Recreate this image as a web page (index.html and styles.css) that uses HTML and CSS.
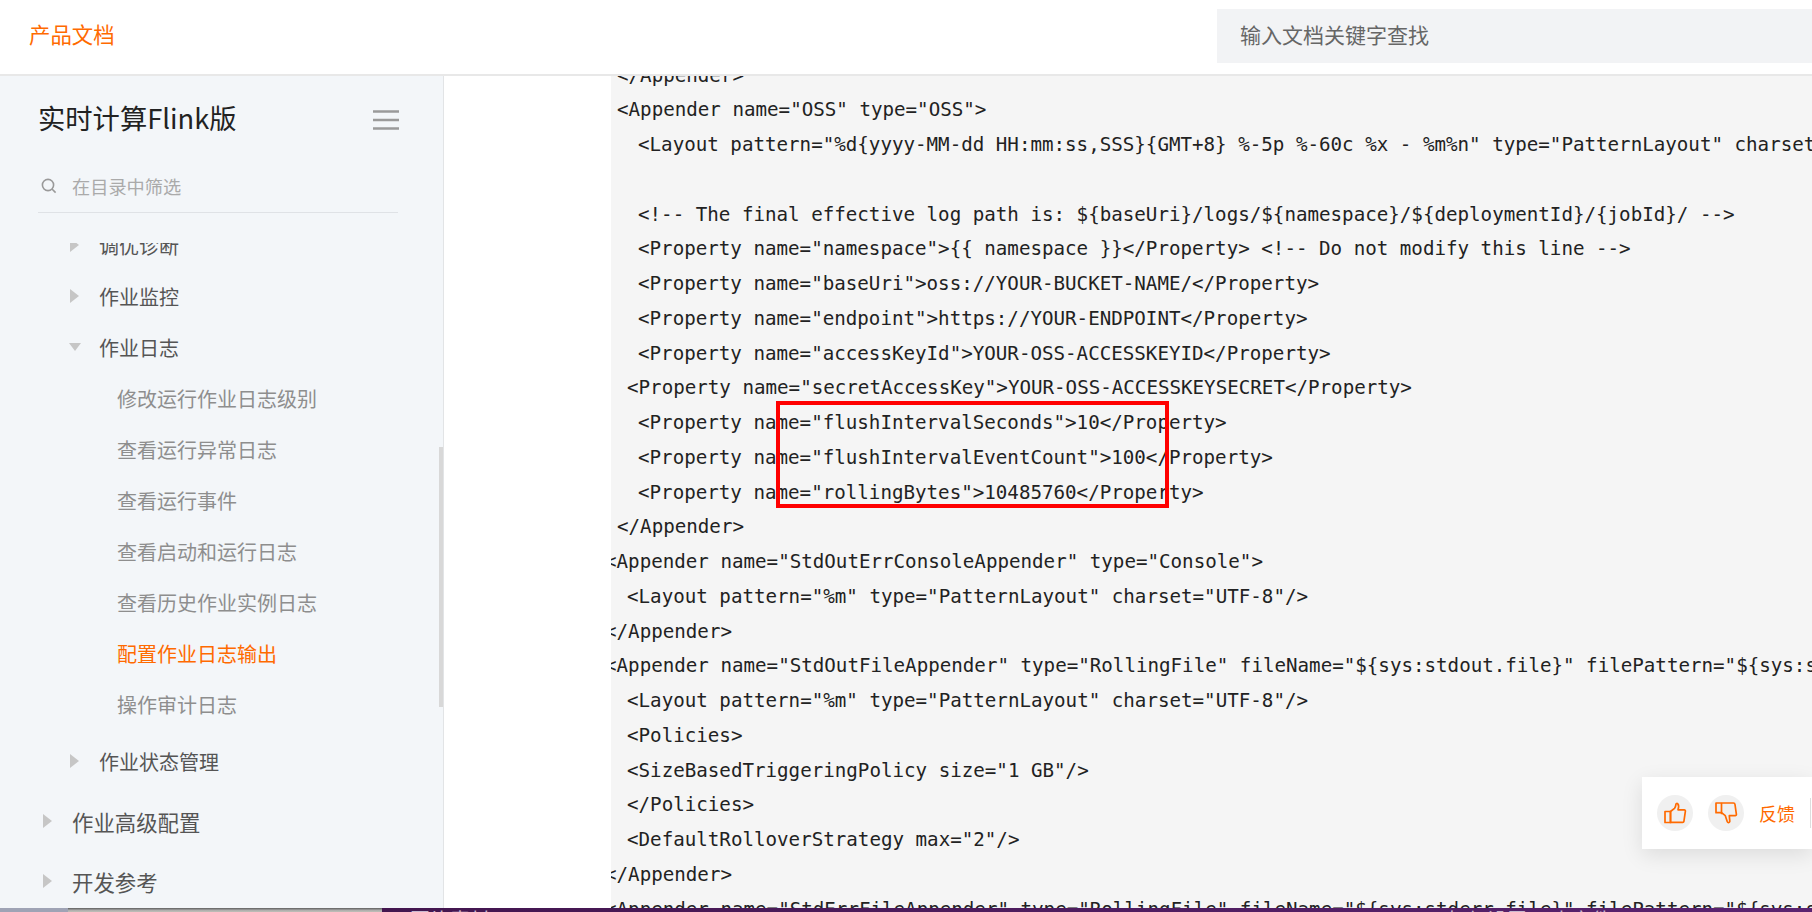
FILE: index.html
```html
<!DOCTYPE html>
<html lang="zh">
<head>
<meta charset="utf-8">
<title>配置作业日志输出</title>
<link rel="stylesheet" href="styles.css">
</head>
<body>
<div class="page">
  <header class="topbar">
    <a class="brand">产品文档</a>
    <div class="search">输入文档关键字查找</div>
  </header>
  <div class="main">
    <aside class="sidebar">
      <div class="side-head">
        <h1 class="side-title">实时计算Flink版</h1>
        <svg class="burger" width="26" height="20" viewBox="0 0 26 20"><path d="M0 1.500h26M0 10h26M0 18.500h26" stroke="#9a9a9a" stroke-width="2.400" fill="none"/></svg>
      </div>
      <div class="filter">
        <svg class="filter-icon" width="16" height="16" viewBox="0 0 16 16"><circle cx="7" cy="7" r="5.600" stroke="#999" stroke-width="1.600" fill="none"/><path d="M11 11l3.600 3.600" stroke="#999" stroke-width="1.600" fill="none"/></svg>
        <span>在目录中筛选</span>
      </div>
      <nav class="tree">
        <div class="tree-inner">
          <div class="row lv2"><i class="tri right"></i>调优诊断</div>
          <div class="row lv2"><i class="tri right"></i>作业监控</div>
          <div class="row lv2"><i class="tri down"></i>作业日志</div>
          <div class="row leaf">修改运行作业日志级别</div>
          <div class="row leaf">查看运行异常日志</div>
          <div class="row leaf">查看运行事件</div>
          <div class="row leaf">查看启动和运行日志</div>
          <div class="row leaf">查看历史作业实例日志</div>
          <div class="row leaf active">配置作业日志输出</div>
          <div class="row leaf">操作审计日志</div>
          <div class="row lv2 state"><i class="tri right"></i>作业状态管理</div>
          <div class="row lv1 adv"><i class="tri right"></i>作业高级配置</div>
          <div class="row lv1 dev"><i class="tri right"></i>开发参考</div>
        </div>
      </nav>
      <div class="side-scroll"></div>
    </aside>
    <section class="content">
      <div class="code">
        <div class="code-lines">
          <code class="l i1">&lt;/Appender&gt;</code>
          <code class="l i1">&lt;Appender name="OSS" type="OSS"&gt;</code>
          <code class="l i3">&lt;Layout pattern="%d{yyyy-MM-dd HH:mm:ss,SSS}{GMT+8} %-5p %-60c %x - %m%n" type="PatternLayout" charset="UTF-8"/&gt;</code>
          <code class="l i3"> </code>
          <code class="l i3">&lt;!-- The final effective log path is: ${baseUri}/logs/${namespace}/${deploymentId}/{jobId}/ --&gt;</code>
          <code class="l i3">&lt;Property name="namespace"&gt;{{ namespace }}&lt;/Property&gt; &lt;!-- Do not modify this line --&gt;</code>
          <code class="l i3">&lt;Property name="baseUri"&gt;oss://YOUR-BUCKET-NAME/&lt;/Property&gt;</code>
          <code class="l i3">&lt;Property name="endpoint"&gt;https://YOUR-ENDPOINT&lt;/Property&gt;</code>
          <code class="l i3">&lt;Property name="accessKeyId"&gt;YOUR-OSS-ACCESSKEYID&lt;/Property&gt;</code>
          <code class="l i2">&lt;Property name="secretAccessKey"&gt;YOUR-OSS-ACCESSKEYSECRET&lt;/Property&gt;</code>
          <code class="l i3">&lt;Property name="flushIntervalSeconds"&gt;10&lt;/Property&gt;</code>
          <code class="l i3">&lt;Property name="flushIntervalEventCount"&gt;100&lt;/Property&gt;</code>
          <code class="l i3">&lt;Property name="rollingBytes"&gt;10485760&lt;/Property&gt;</code>
          <code class="l i1">&lt;/Appender&gt;</code>
          <code class="l i0">&lt;Appender name="StdOutErrConsoleAppender" type="Console"&gt;</code>
          <code class="l i2">&lt;Layout pattern="%m" type="PatternLayout" charset="UTF-8"/&gt;</code>
          <code class="l i0">&lt;/Appender&gt;</code>
          <code class="l i0">&lt;Appender name="StdOutFileAppender" type="RollingFile" fileName="${sys:stdout.file}" filePattern="${sys:stdout.file}.%i"&gt;</code>
          <code class="l i2">&lt;Layout pattern="%m" type="PatternLayout" charset="UTF-8"/&gt;</code>
          <code class="l i2">&lt;Policies&gt;</code>
          <code class="l i2">&lt;SizeBasedTriggeringPolicy size="1 GB"/&gt;</code>
          <code class="l i2">&lt;/Policies&gt;</code>
          <code class="l i2">&lt;DefaultRolloverStrategy max="2"/&gt;</code>
          <code class="l i0">&lt;/Appender&gt;</code>
          <code class="l i0">&lt;Appender name="StdErrFileAppender" type="RollingFile" fileName="${sys:stderr.file}" filePattern="${sys:stderr.file}.%i"&gt;</code>
        </div>
        <div class="redbox"></div>
      </div>
      <div class="feedback">
        <span class="fb-btn"><svg width="24" height="24" viewBox="0 0 24 24" fill="none" stroke="#ff6a00" stroke-width="1.700" stroke-linejoin="round" stroke-linecap="round"><path d="M7.500 10.500l4-3.200c.8-.8 1.200-1.800 1.400-4 .1-.9 1.200-1.100 1.900-.4 1 1.100 1.100 3.300.2 5.900h6.200c.8 0 1.300.7 1.200 1.400l-1.500 10.200c-.1.6-.6 1-1.200 1H7.500z"/><path d="M2 10.500h5.500v11H2z"/></svg></span>
        <span class="fb-btn"><svg width="24" height="24" viewBox="0 0 24 24" fill="none" stroke="#ff6a00" stroke-width="1.700" stroke-linejoin="round" stroke-linecap="round"><path d="M2 2h17.500c.8 0 1.400.7 1.500 1.500l1.400 9.800c.1.700-.4 1.400-1.200 1.400h-5.900l.5 5.700c-.2 1.500-2 1.600-2.500.3l-2-6-3.800-3H2z"/><path d="M7.500 2.500v10"/></svg></span>
        <span class="fb-label">反馈</span>
        <span class="fb-sep"></span>
      </div>
    </section>
  </div>
  <footer class="strip">
    <div class="strip-left"></div>
    <div class="strip-right">
      <span class="strip-text">图片素材</span>
      <span class="strip-text far">如何设置 日志文件</span>
    </div>
  </footer>
</div>
</body>
</html>
```
FILE: styles.css
```css
* { box-sizing: border-box; }
html, body { margin: 0; padding: 0; height: 100%; overflow: hidden; }
body { font-family: "Noto Sans CJK SC", "Liberation Sans", sans-serif; background: #fff; color: #333; }
.page { width: 1812px; height: 912px; display: flex; flex-direction: column; overflow: hidden; }

.topbar { height: 76px; flex: none; background: #fff; border-bottom: 2px solid #e8e8e8; display: flex; align-items: flex-start; justify-content: space-between; }
.brand { margin: 20px 0 0 29px; font-size: 21.400px; line-height: 28px; color: #ff6a00; }
.search { margin-top: 9px; width: 595px; height: 54px; background: #f2f3f5; padding-left: 23px; font-size: 21px; line-height: 50px; color: #666; }

.main { flex: 1; min-height: 0; display: flex; }
.sidebar { width: 444px; flex: none; position: relative; background: #f3f6f9; border-right: 1px solid #e2e4e6; padding: 0 0 0 38px; display: flex; flex-direction: column; overflow: hidden; }
.side-head { height: 75px; width: 361px; flex: none; display: flex; align-items: center; justify-content: space-between; padding-top: 12px; }
.side-title { margin: -5px 0 0; font-size: 27.300px; font-weight: 400; line-height: 38px; color: #222; }
.filter { width: 360px; height: 62px; flex: none; border-bottom: 1px solid #dfe2e6; display: flex; align-items: center; gap: 15px; padding: 8px 0 0 3px; font-size: 18.200px; color: #aaa; }
.filter-icon { flex: none; }
.tree { flex: 1; min-height: 0; margin: 30px 0 0 -38px; overflow: hidden; }
.tree-inner { margin-top: -23.500px; }
.row { height: 51px; display: flex; align-items: center; font-size: 20px; position: relative; white-space: nowrap; }
.lv2 { padding-left: 99px; color: #555; }
.lv1 { padding-left: 72px; color: #555; font-size: 21.400px; }
.leaf { padding-left: 117px; color: #8e8e8e; }
.active { color: #ff6a00; }
.state { margin-top: 6px; }
.adv { margin-top: 7px; height: 55px; }
.dev { margin-top: 5px; height: 55px; }
.tri { position: absolute; width: 0; height: 0; border-style: solid; border-color: transparent; }
.tri.right { border-width: 7px 0 7px 9px; border-left-color: #c6c6c6; }
.lv2 .tri { left: 70px; }
.lv1 .tri { left: 43px; }
.tri.down { left: 69px; border-width: 8px 6px 0 6px; border-top-color: #c6c6c6; }
.side-scroll { position: absolute; right: 0; top: 371px; width: 4px; height: 260px; background: #d8d8d8; }

.content { flex: 1; min-width: 0; position: relative; padding-left: 167px; background: #fff; overflow: hidden; }
.code { height: 100%; background: #f5f5f5; overflow: hidden; position: relative; }
.code-lines { margin-top: -17.500px; font-size: 19.180px; line-height: 34.750px; color: #222; }
.l { display: block; white-space: pre; font-family: "DejaVu Sans Mono", "Liberation Mono", monospace; font-size: 19.180px; line-height: 34.750px; height: 34.750px; }
.i0 { margin-left: -6px; }
.i1 { margin-left: 6px; }
.i2 { margin-left: 16px; }
.i3 { margin-left: 27px; }
.redbox { position: absolute; left: 165px; top: 325px; width: 393px; height: 107px; border: 4px solid #f00; }

.feedback { position: absolute; right: 0; top: 701px; width: 170px; height: 72px; background: #fff; box-shadow: 0 6px 20px rgba(0,0,0,.1); display: flex; align-items: center; padding-left: 15px; }
.fb-btn { width: 36px; height: 36px; border-radius: 50%; background: #f0f0f0; display: flex; align-items: center; justify-content: center; margin-right: 15px; flex: none; }
.fb-label { font-size: 18px; color: #ff6a00; white-space: nowrap; margin-right: 15px; }
.fb-sep { width: 1px; height: 30px; background: #ddd; flex: none; }

.strip { height: 4px; flex: none; display: flex; overflow: hidden; }
.strip-left { width: 382px; flex: none; background: linear-gradient(90deg, #9fa3b5 68px, transparent 68px), linear-gradient(180deg, #666 0, #777 1px, #aaa 2px, #c0c0b8 100%); }
.strip-right { flex: 1; position: relative; background: linear-gradient(90deg, #43164f, #5a2370); overflow: hidden; }
.strip-text { position: absolute; left: 28px; top: 0; font-size: 20px; line-height: 24px; color: #c9b8cf; white-space: nowrap; }
.strip-text.far { left: 1065px; }
```
